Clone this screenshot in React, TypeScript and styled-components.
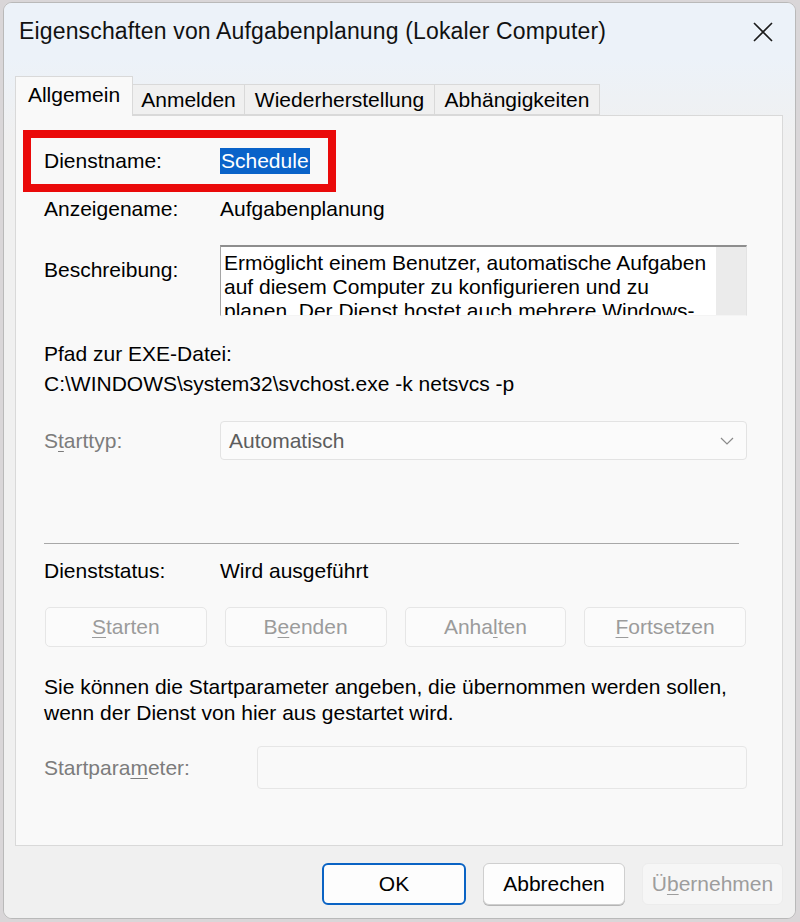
import React from "react";
import styled, { createGlobalStyle } from "styled-components";

const Global = createGlobalStyle`
  html, body { margin: 0; padding: 0; }
  body {
    background: #d9d6d8;
    font-family: "Liberation Sans", Arial, sans-serif;
    width: 800px;
    height: 922px;
    overflow: hidden;
  }
  * { box-sizing: border-box; }
`;

const Window = styled.div`
  margin: 2px 0 0 3px;
  width: 793px;
  height: 917px;
  border: 1px solid #b9b9b9;
  border-radius: 9px;
  background: #f0f0f0;
  overflow: hidden;
  display: flex;
  flex-direction: column;
`;

const TitleBar = styled.div`
  height: 55px;
  flex: none;
  background: #ecf2f9;
  display: flex;
  align-items: center;
  padding: 2px 16px 0 15px;
`;

const Title = styled.div`
  flex: 1;
  font-size: 23px;
  color: #111;
  letter-spacing: 0.15px;
`;

const CloseBtn = styled.div`
  width: 22px;
  height: 22px;
  display: flex;
  align-items: center;
  justify-content: center;
  margin-right: 5px;
`;

const Body = styled.div`
  flex: 1;
  background: linear-gradient(#ecf2f9 0px, #f0f0f0 80px);
  padding: 18px 12px 0 11px;
  display: flex;
  flex-direction: column;
`;

const TabRow = styled.div`
  display: flex;
  align-items: flex-end;
  height: 39px;
  position: relative;
  z-index: 2;
`;

const Tab = styled.div<{ $w: number; $active?: boolean }>`
  width: ${(p) => p.$w}px;
  height: ${(p) => (p.$active ? 40 : 31)}px;
  margin-bottom: ${(p) => (p.$active ? -1 : 0)}px;
  border: 1px solid #d9d9d9;
  border-bottom: ${(p) => (p.$active ? "none" : "1px solid #d9d9d9")};
  border-left-width: ${(p) => (p.$active ? 1 : 0)}px;
  background: ${(p) => (p.$active ? "#f9f9f9" : "#f0f0f0")};
  font-size: 21px;
  color: #000;
  display: flex;
  align-items: center;
  justify-content: center;
  padding-top: 0;
  padding-bottom: ${(p) => (p.$active ? 4 : 0)}px;
  &:nth-child(2) { border-left-width: 0; }
`;

const Panel = styled.div`
  position: relative;
  height: 731px;
  flex: none;
  border: 1px solid #d9d9d9;
  background: #f9f9f9;
  padding: 0 35px 0 28px;
  display: flex;
  flex-direction: column;
`;

const Highlight = styled.div`
  position: absolute;
  left: 7px;
  top: 14px;
  width: 313px;
  height: 62px;
  border: 8px solid #ea0a0a;
  pointer-events: none;
`;

const Row = styled.div<{ $mt: number; $h?: number; $top?: boolean }>`
  margin-top: ${(p) => p.$mt}px;
  min-height: ${(p) => p.$h ?? 28}px;
  display: flex;
  align-items: ${(p) => (p.$top ? "flex-start" : "center")};
  font-size: 21px;
  color: #000;
`;

const Label = styled.div<{ $w?: number; $dim?: boolean; $mt?: number }>`
  width: ${(p) => p.$w ?? 176}px;
  flex: none;
  color: ${(p) => (p.$dim ? "#7c7c7c" : "#000")};
  margin-top: ${(p) => p.$mt ?? 0}px;
  line-height: 28px;
`;

const Value = styled.div`
  line-height: 28px;
`;

const Selected = styled.span`
  background: #0a63c9;
  color: #fff;
  padding: 0 1px 1px 1px;
  line-height: 25px;
  display: inline-block;
`;

const Plain = styled.div`
  line-height: 28px;
  font-size: 21px;
  color: #000;
`;

const TextBox = styled.div`
  flex: 1;
  height: 71px;
  display: flex;
  background: #fff;
  border-top: 2px solid #8e8e8e;
  border-left: 1px solid #a5a5a5;
  border-right: 1px solid #e3e3e3;
  border-bottom: 1px solid #f4f4f4;
  overflow: hidden;
`;

const TextContent = styled.div`
  flex: 1;
  padding: 4px 6px 0 3px;
  font-size: 21px;
  line-height: 24px;
  color: #000;
  overflow: hidden;
`;

const ScrollTrack = styled.div`
  width: 30px;
  flex: none;
  background: #ebebeb;
`;

const Combo = styled.div`
  flex: 1;
  height: 39px;
  border: 1px solid #e3e3e3;
  border-radius: 4px;
  background: #fbfbfb;
  display: flex;
  align-items: center;
  padding: 0 12px 0 8px;
  color: #5d5d5d;
  font-size: 21px;
`;

const ComboText = styled.div`
  flex: 1;
`;

const Input = styled.div`
  flex: 1;
  height: 43px;
  border: 1px solid #e6e6e6;
  border-radius: 4px;
  background: #f9f9f9;
`;

const Separator = styled.div<{ $mt: number }>`
  margin-top: ${(p) => p.$mt}px;
  margin-right: 8px;
  height: 1px;
  border-top: 1px solid #9f9f9f;
  opacity: 0.9;
`;

const ButtonGrid = styled.div<{ $mt: number }>`
  margin-top: ${(p) => p.$mt}px;
  display: grid;
  grid-template-columns: repeat(4, 1fr);
  column-gap: 18px;
  padding-left: 1px;
  padding-right: 1px;
`;

const DisabledButton = styled.div`
  height: 40px;
  border: 1px solid #e6e6e6;
  border-radius: 5px;
  background: #fbfbfb;
  color: #9b9b9b;
  font-size: 21px;
  display: flex;
  align-items: center;
  justify-content: center;
`;

const Para = styled.div<{ $mt: number }>`
  margin-top: ${(p) => p.$mt}px;
  font-size: 21px;
  line-height: 26px;
  color: #000;
`;

const Key = styled.span`
  text-decoration: underline;
  text-underline-offset: 3px;
  text-decoration-thickness: 1px;
`;

const Footer = styled.div`
  display: flex;
  justify-content: flex-end;
  gap: 17px;
  padding-top: 17px;
`;

const FooterButton = styled.div<{ $w: number; $variant: "primary" | "normal" | "disabled" }>`
  width: ${(p) => p.$w}px;
  height: 42px;
  border-radius: 6px;
  font-size: 21px;
  display: flex;
  align-items: center;
  justify-content: center;
  background: ${(p) => (p.$variant === "disabled" ? "#f6f6f6" : "#fdfdfd")};
  color: ${(p) => (p.$variant === "disabled" ? "#9d9d9d" : "#000")};
  border: ${(p) =>
    p.$variant === "primary"
      ? "2px solid #0a63c4"
      : p.$variant === "normal"
      ? "1px solid #cfcfcf"
      : "1px solid #ececec"};
  box-shadow: ${(p) => (p.$variant === "normal" ? "0 1px 0 #b5b5b5" : "none")};
`;

const tabs = [
  { label: "Allgemein", w: 118, active: true },
  { label: "Anmelden", w: 112 },
  { label: "Wiederherstellung", w: 190 },
  { label: "Abhängigkeiten", w: 165 },
];

export default function App() {
  return (
    <>
      <Global />
      <Window>
        <TitleBar>
          <Title>Eigenschaften von Aufgabenplanung (Lokaler Computer)</Title>
          <CloseBtn>
            <svg width="20" height="20" viewBox="0 0 20 20">
              <path d="M1 1 L19 19 M19 1 L1 19" stroke="#1b1b1b" strokeWidth="1.6" fill="none" />
            </svg>
          </CloseBtn>
        </TitleBar>
        <Body>
          <TabRow>
            {tabs.map((t) => (
              <Tab key={t.label} $w={t.w} $active={t.active}>
                {t.label}
              </Tab>
            ))}
          </TabRow>
          <Panel>
            <Row $mt={31}>
              <Label>Dienstname:</Label>
              <Value>
                <Selected>Schedule</Selected>
              </Value>
            </Row>
            <Row $mt={20}>
              <Label>Anzeigename:</Label>
              <Value>Aufgabenplanung</Value>
            </Row>
            <Row $mt={22} $h={71} $top>
              <Label $mt={11}>Beschreibung:</Label>
              <TextBox>
                <TextContent>
                  Ermöglicht einem Benutzer, automatische Aufgaben auf diesem Computer zu
                  konfigurieren und zu planen. Der Dienst hostet auch mehrere Windows-systemkritische
                  Aufgaben.
                </TextContent>
                <ScrollTrack />
              </TextBox>
            </Row>
            <Row $mt={24}>
              <Plain>Pfad zur EXE-Datei:</Plain>
            </Row>
            <Row $mt={2}>
              <Plain>C:\WINDOWS\system32\svchost.exe -k netsvcs -p</Plain>
            </Row>
            <Row $mt={23} $h={39}>
              <Label $dim>
                S<Key>t</Key>arttyp:
              </Label>
              <Combo>
                <ComboText>Automatisch</ComboText>
                <svg width="14" height="8" viewBox="0 0 14 8">
                  <path d="M1 1 L7 7 L13 1" stroke="#8a8a8a" strokeWidth="1.2" fill="none" />
                </svg>
              </Combo>
            </Row>
            <Separator $mt={83} />
            <Row $mt={13}>
              <Label>Dienststatus:</Label>
              <Value>Wird ausgeführt</Value>
            </Row>
            <ButtonGrid $mt={22}>
              <DisabledButton>
                <Key>S</Key>tarten
              </DisabledButton>
              <DisabledButton>
                B<Key>e</Key>enden
              </DisabledButton>
              <DisabledButton>
                Anha<Key>l</Key>ten
              </DisabledButton>
              <DisabledButton>
                <Key>F</Key>ortsetzen
              </DisabledButton>
            </ButtonGrid>
            <Para $mt={27}>
              Sie können die Startparameter angeben, die übernommen werden sollen,
              <br />
              wenn der Dienst von hier aus gestartet wird.
            </Para>
            <Row $mt={20} $h={43}>
              <Label $w={213} $dim>
                Startpara<Key>m</Key>eter:
              </Label>
              <Input />
            </Row>
            <Highlight />
          </Panel>
          <Footer>
            <FooterButton $w={144} $variant="primary">OK</FooterButton>
            <FooterButton $w={142} $variant="normal">Abbrechen</FooterButton>
            <FooterButton $w={141} $variant="disabled">
              Ü<Key>b</Key>ernehmen
            </FooterButton>
          </Footer>
        </Body>
      </Window>
    </>
  );
}
